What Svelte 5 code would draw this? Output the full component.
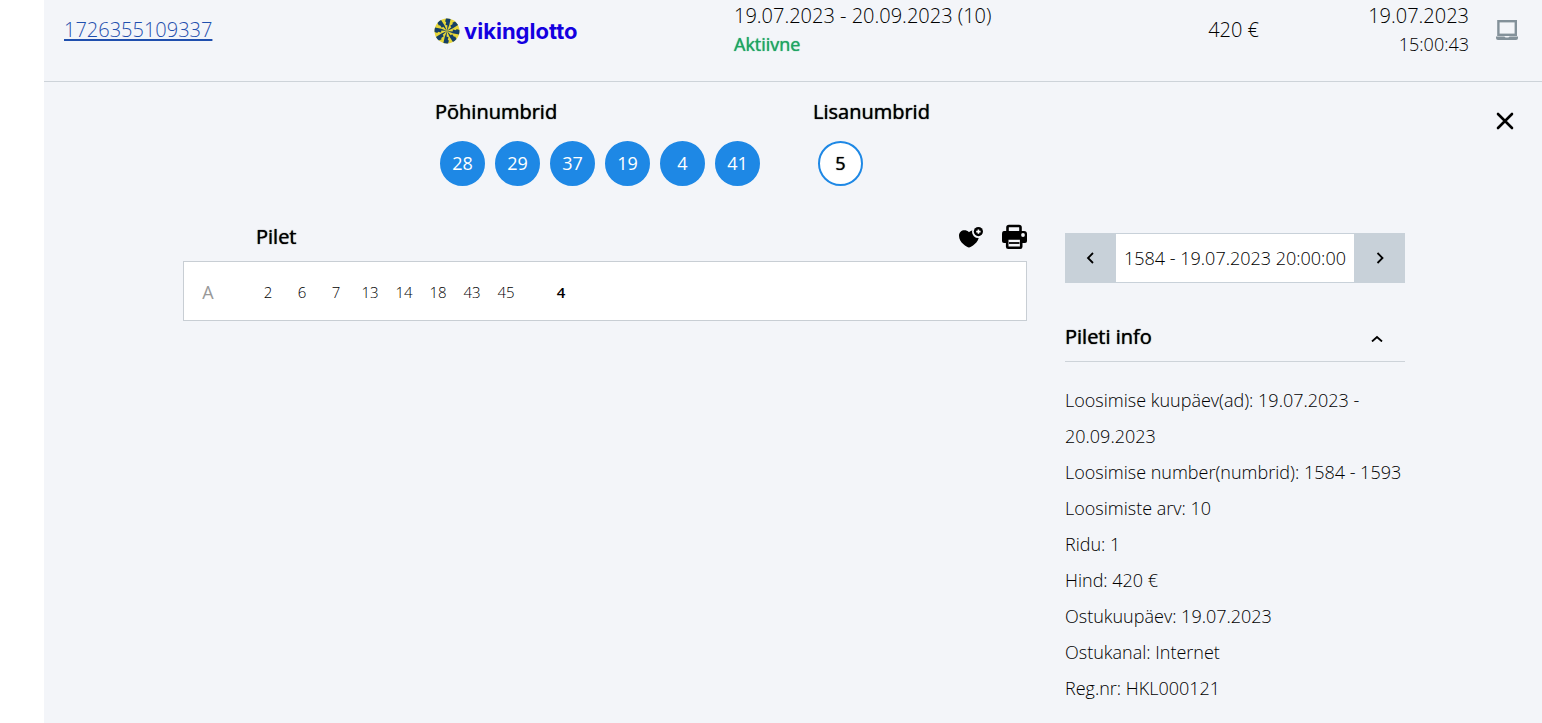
<script lang="ts">
    let infoOpen = $state(true);

    const mainNumbers = [28, 29, 37, 19, 4, 41];
    const extraNumbers = [5];
    const ticketRows = [{ letter: 'A', numbers: [2, 6, 7, 13, 14, 18, 43, 45], extra: 4 }];

    const info = [
        { label: 'Loosimise kuupäev(ad)', value: '19.07.2023 - 20.09.2023' },
        { label: 'Loosimise number(numbrid)', value: '1584 - 1593' },
        { label: 'Loosimiste arv', value: '10' },
        { label: 'Ridu', value: '1' },
        { label: 'Hind', value: '420 €' },
        { label: 'Ostukuupäev', value: '19.07.2023' },
        { label: 'Ostukanal', value: 'Internet' },
        { label: 'Reg.nr', value: 'HKL000121' }
    ];

    const blades = [0, 45, 90, 135, 180, 225, 270, 315];
</script>

<main class="ticket">
    <header class="summary">
        <div><a class="ticket-link" href="#ticket">1726355109337</a></div>
        <div class="logo">
            <svg width="26" height="26" viewBox="0 0 26 26" aria-hidden="true">
                <circle cx="13" cy="13" r="12.5" fill="#e6d63a" />
                {#each blades as angle (angle)}
                    <path
                        d="M13 13 L12 7.4 L10.2 7.6 L10 4.4 L8.8 4.2 L9 1.2 A12.5 12.5 0 0 1 13.6 0.5 L13.8 7 Z"
                        fill="#153f66"
                        transform="rotate({angle + 14} 13 13)"
                    />
                {/each}
            </svg>
            <span>vikinglotto</span>
        </div>
        <div class="period">
            <div>19.07.2023 - 20.09.2023 (10)</div>
            <div class="status">Aktiivne</div>
        </div>
        <div class="price">420 €</div>
        <div class="bought">
            <div>19.07.2023</div>
            <div class="time">15:00:43</div>
        </div>
        <svg class="channel" width="22" height="20" viewBox="0 0 22 20" aria-hidden="true">
            <rect x="2.4" y="1.2" width="17.4" height="13.6" fill="none" stroke="#83919a" stroke-width="2.4" />
            <path d="M0 16.6h8.4q.6 1 1.6 1h2q1 0 1.600-1H22v1.400q0 2-2 2H2q-2 0-2-2z" fill="#83919a" />
        </svg>
    </header>

    <section class="drawn">
        <div class="group main-group">
            <h2>Põhinumbrid</h2>
            <div class="balls">
                {#each mainNumbers as n (n)}
                    <span class="ball">{n}</span>
                {/each}
            </div>
        </div>
        <div class="group">
            <h2>Lisanumbrid</h2>
            <div class="balls">
                {#each extraNumbers as n (n)}
                    <span class="ball extra">{n}</span>
                {/each}
            </div>
        </div>
        <button class="icon-button close" aria-label="Sulge">
            <svg width="18" height="18" viewBox="0 0 18 18">
                <path d="M2 2l14 14M16 2L2 16" stroke="#000" stroke-width="2.6" stroke-linecap="round" />
            </svg>
        </button>
    </section>

    <div class="details">
        <section class="rows">
            <div class="rows-head">
                <h2>Pilet</h2>
                <div class="actions">
                    <button class="icon-button" aria-label="Lisa lemmikuks">
                        <svg width="26" height="26" viewBox="0 0 26 26">
                            <path
                                d="M12 23.500C10 23.500 2 18.500 2 11.800C2 6 8.500 4.600 12 8.200C15 4.800 22 6.500 22 11.800C22 18.500 14 23.500 12 23.500z"
                            />
                            <circle cx="21.400" cy="7.600" r="6.400" fill="#f3f5f9" />
                            <circle cx="21.400" cy="7.600" r="4.600" />
                            <path d="M21.400 5.400v4.400M19.200 7.600h4.400" stroke="#fff" stroke-width="1.600" />
                        </svg>
                    </button>
                    <button class="icon-button" aria-label="Prindi">
                        <svg width="26" height="26" viewBox="0 0 26 26">
                            <path d="M6.500 8V3.500q0-1.500 1.500-1.500h10q1.500 0 1.500 1.500V8" fill="none" stroke="#000" stroke-width="2.600" />
                            <path d="M3 7h20Q26 7 26 10V17q0 2-2 2H3q-2 0-2-2V10Q1 7 3 7z" />
                            <rect x="6.200" y="14.500" width="14" height="9.200" rx="1" fill="#f3f5f9" stroke="#000" stroke-width="2.600" />
                            <path d="M8 19h10.500" stroke="#000" stroke-width="1.800" />
                            <circle cx="22" cy="11" r="1.900" fill="#f3f5f9" />
                        </svg>
                    </button>
                </div>
            </div>
            <div class="board">
                {#each ticketRows as row (row.letter)}
                    <div class="board-row">
                        <span class="letter">{row.letter}</span>
                        {#each row.numbers as n (n)}
                            <span class="number">{n}</span>
                        {/each}
                        <span class="number bonus">{row.extra}</span>
                    </div>
                {/each}
            </div>
        </section>

        <aside>
            <div class="draw-picker">
                <button aria-label="Eelmine loosimine">
                    <svg width="12" height="14" viewBox="0 0 12 14">
                        <path d="M8 2L3 7l5 5" fill="none" stroke="#000" stroke-width="1.800" />
                    </svg>
                </button>
                <span>1584 - 19.07.2023 20:00:00</span>
                <button aria-label="Järgmine loosimine">
                    <svg width="12" height="14" viewBox="0 0 12 14">
                        <path d="M3.500 2l5 5-5 5" fill="none" stroke="#000" stroke-width="1.800" />
                    </svg>
                </button>
            </div>

            <h2 class="info-title">
                <button class="info-toggle" aria-expanded={infoOpen} onclick={() => (infoOpen = !infoOpen)}>
                    Pileti info
                    <svg class:closed={!infoOpen} width="14" height="10" viewBox="0 0 14 10">
                        <path d="M2 9.500l5-4.500 5 4.500" fill="none" stroke="#000" stroke-width="1.800" />
                    </svg>
                </button>
            </h2>
            {#if infoOpen}
                <ul class="info">
                    {#each info as item (item.label)}
                        <li>{item.label}: {item.value}</li>
                    {/each}
                </ul>
            {/if}
        </aside>
    </div>
</main>

<style>
    :global(body) {
        background: #fff;
    }

    .ticket {
        box-sizing: border-box;
        min-height: 100vh;
        margin-left: 44px;
        background: #f3f5f9;
        color: #000;
        font-family: 'Open Sans', 'Noto Sans', sans-serif;
        font-size: 18px;
        font-weight: 350;
        line-height: 28px;
    }

    h2 {
        margin: 0;
        font-size: 20px;
        font-weight: 400;
        line-height: 28px;
        text-shadow: 0 0 1px #000;
    }

    button {
        padding: 0;
        border: 0;
        background: none;
        color: inherit;
        font: inherit;
        cursor: pointer;
    }

    svg {
        display: block;
    }

    .summary {
        display: grid;
        grid-template-columns: 370fr 300fr 425fr 100fr 210fr 49px;
        align-items: center;
        padding: 2px 24px 23px 20px;
        border-bottom: 1px solid #cdd3d9;
        font-size: 20px;
    }

    .ticket-link {
        color: #1f4fae;
        text-underline-offset: 2px;
    }

    .logo {
        display: flex;
        align-items: center;
        gap: 4px;
        padding-top: 2px;
        color: #1400e0;
        font-family: Inter, sans-serif;
        font-size: 22px;
        font-weight: 700;
    }

    .status {
        color: #1da462;
        font-size: 18px;
        font-weight: 400;
        text-shadow: 0 0 1px #1da462;
    }

    .price,
    .bought {
        text-align: right;
    }

    .time {
        font-size: 18px;
    }

    .channel {
        justify-self: end;
    }

    .drawn {
        display: flex;
        align-items: flex-start;
        padding: 16px 28px 0 391px;
    }

    .main-group {
        width: 378px;
    }

    .balls {
        display: flex;
        gap: 10px;
        padding: 15px 5px 0;
    }

    .ball {
        box-sizing: border-box;
        width: 45px;
        height: 45px;
        border: 2px solid #1e88e5;
        border-radius: 50%;
        background: #1e88e5;
        color: #fff;
        font-weight: 400;
        line-height: 41px;
        text-align: center;
    }

    .extra {
        background: #fff;
        color: #000;
        text-shadow: 0 0 1px #000;
    }

    .close {
        margin: 14px 0 0 auto;
    }

    .details {
        display: flex;
        align-items: flex-start;
        gap: 38px;
        padding: 36px 137px 16px 139px;
    }

    .rows {
        flex: 1;
    }

    .rows-head {
        display: flex;
        align-items: center;
        justify-content: space-between;
        padding: 1px 0 10px 73px;
    }

    .actions {
        display: flex;
        gap: 18px;
    }

    .board {
        padding: 16px 15px 14px;
        border: 1px solid #c8ced4;
        background: #fff;
    }

    .board-row {
        display: flex;
        align-items: center;
    }

    .letter {
        width: 18px;
        margin-right: 34px;
        color: #999;
        font-weight: 400;
        text-align: center;
    }

    .number {
        width: 34px;
        font-size: 15px;
        text-align: center;
    }

    .bonus {
        margin-left: 21px;
        font-weight: 600;
    }

    aside {
        width: 340px;
        margin-top: 11px;
    }

    .draw-picker {
        display: grid;
        grid-template-columns: 51px 1fr 51px;
    }

    .draw-picker button {
        display: grid;
        place-items: center;
        background: #c8d1d9;
    }

    .draw-picker span {
        border: solid #c8d1d9;
        border-width: 1px 0;
        background: #fff;
        line-height: 48px;
        text-align: center;
        white-space: nowrap;
    }

    .info-title {
        margin-top: 40px;
        padding-bottom: 10px;
        border-bottom: 1px solid #cdd3d9;
    }

    .info-toggle {
        display: flex;
        align-items: center;
        justify-content: space-between;
        width: 100%;
        padding-right: 21px;
        text-shadow: inherit;
    }

    .closed {
        transform: rotate(180deg);
    }

    .info {
        margin: 20px 0 0;
        padding: 0;
        line-height: 36px;
        list-style: none;
    }
</style>
